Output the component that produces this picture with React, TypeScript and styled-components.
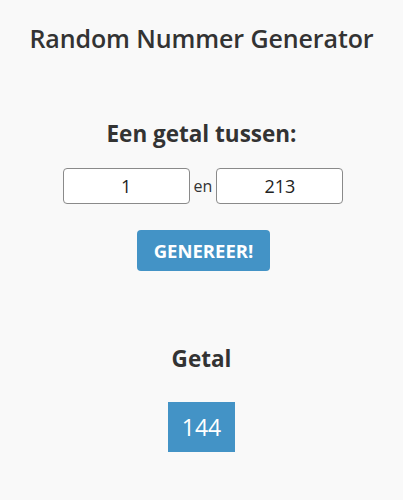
import * as React from 'react'
import styled, { createGlobalStyle } from 'styled-components'

const GlobalStyle = createGlobalStyle`
  body {
    margin: 0;
    background: #f9f9f9;
    color: #333;
    font-family: "Open Sans", "Liberation Sans", sans-serif;
  }
`

const Page = styled.div`
  display: flex;
  flex-direction: column;
  align-items: center;
  padding-top: 21px;
`

const Title = styled.h1`
  margin: 0;
  font-family: "Open Sans", "Lato", sans-serif;
  font-size: 25px;
  font-weight: 600;
  color: #333;
  letter-spacing: -0.1px;
`

const Heading = styled.h2<{ $top: number }>`
  margin: ${p => p.$top}px 0 0;
  font-size: 22.5px;
  font-weight: 700;
  color: #333;
`

const RangeRow = styled.div`
  display: flex;
  align-items: center;
  gap: 4px;
  margin-top: 19px;
  padding-left: 3px;
`

const NumberInput = styled.input`
  box-sizing: border-box;
  width: 127px;
  height: 36px;
  border: 1px solid #8a8a8a;
  border-radius: 4px;
  background: #fff;
  text-align: center;
  font-family: "Open Sans", sans-serif;
  font-size: 18px;
  color: #222;
  outline: none;
`

const Joiner = styled.span`
  font-size: 16px;
  color: #333;
`

const Button = styled.button`
  margin: 26px 0 0 4px;
  width: 133px;
  height: 41px;
  border: none;
  border-radius: 4px;
  background: #4393c6;
  color: #fff;
  font-family: "Open Sans", sans-serif;
  font-size: 18.5px;
  font-weight: 700;
  cursor: pointer;
`

const Result = styled.div`
  margin-top: 28px;
  width: 67px;
  height: 50px;
  display: flex;
  align-items: center;
  justify-content: center;
  background: #4393c6;
  color: #fff;
  font-size: 23px;
`

const App = () => {
  const [min, setMin] = React.useState('1')
  const [max, setMax] = React.useState('213')
  const [value, setValue] = React.useState(144)

  const generate = () => {
    const lo = parseInt(min, 10) || 0
    const hi = parseInt(max, 10) || 0
    setValue(Math.floor(Math.random() * (hi - lo + 1)) + lo)
  }

  return (
    <>
      <GlobalStyle />
      <Page>
        <Title>Random Nummer Generator</Title>
        <Heading $top={63}>Een getal tussen:</Heading>
        <RangeRow>
          <NumberInput value={min} onChange={e => setMin(e.target.value)} />
          <Joiner>en</Joiner>
          <NumberInput value={max} onChange={e => setMax(e.target.value)} />
        </RangeRow>
        <Button onClick={generate}>GENEREER!</Button>
        <Heading $top={72}>Getal</Heading>
        <Result>{value}</Result>
      </Page>
    </>
  )
}

export default App
